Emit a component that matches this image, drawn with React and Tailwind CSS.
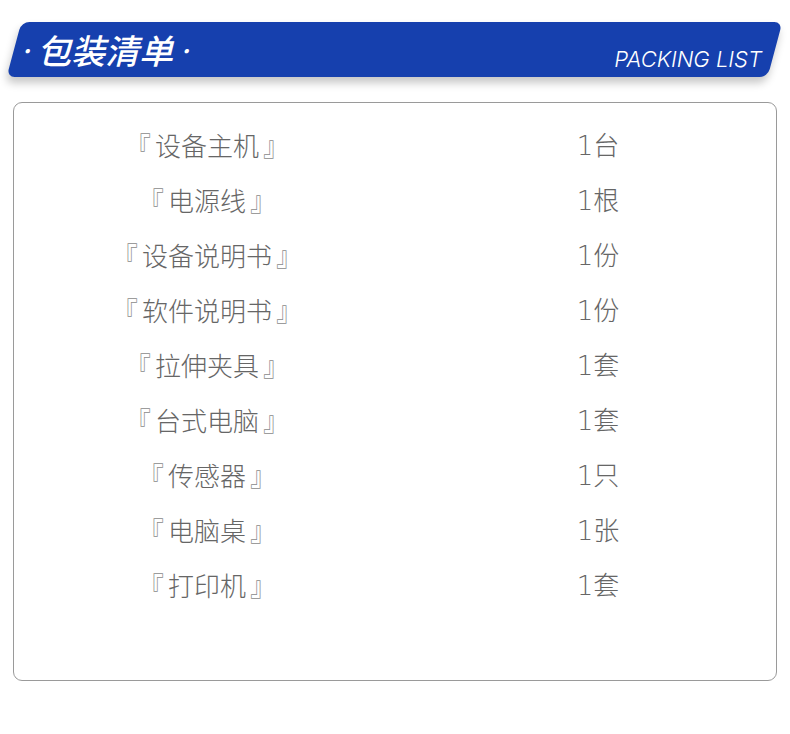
import React from "react";

const items = [
  ["设备主机", "台"],
  ["电源线", "根"],
  ["设备说明书", "份"],
  ["软件说明书", "份"],
  ["拉伸夹具", "套"],
  ["台式电脑", "套"],
  ["传感器", "只"],
  ["电脑桌", "张"],
  ["打印机", "套"],
];

export default function App() {
  return (
    <div
      className="w-[790px] h-[734px] bg-white overflow-hidden"
      style={{ fontFamily: '"Noto Sans CJK SC", "Noto Sans", sans-serif' }}
    >
      <div className="pt-[22px] pl-[14px]">
        <div className="relative w-[761px] h-[55px]">
          <div className="absolute inset-0 -skew-x-[15deg] rounded-[8px] bg-[#1640ae] shadow-[0_6px_8px_rgba(0,0,0,0.22)]" />
          <div className="relative flex h-full items-stretch justify-between pl-[3px] pr-[13px]">
            <div className="flex items-center text-white italic font-medium text-[34px] leading-none">
              <span className="text-[18px] mr-[2px]">·</span>
              <span>包装清单</span>
              <span className="text-[18px] ml-[3px]">·</span>
            </div>
            <div
              className="flex items-end pb-[7px] text-white italic font-light text-[22px] leading-none"
              style={{ fontFamily: '"Inter", "Roboto", sans-serif' }}
            >
              PACKING LIST
            </div>
          </div>
        </div>
      </div>
      <div className="ml-[13px] mt-[25px] w-[764px] h-[579px] rounded-[9px] border border-[#9a9a9a] pt-[14px]">
        {items.map(([name, qty], i) => (
          <div key={i} className="flex h-[55px] items-center text-[26px] font-light text-[#666666] leading-none">
            <div className="w-[386px] shrink-0 text-center">
              <span className="text-[#8a8a8a] mr-[4px]">『</span>
              {name}
              <span className="text-[#8a8a8a] ml-[4px]">』</span>
            </div>
            <div className="w-[376px] shrink-0 pl-[20px] text-center">
              <span
                className="font-extralight"
                style={{ fontFamily: '"DejaVu Sans", sans-serif' }}
              >
                1
              </span>
              {qty}
            </div>
          </div>
        ))}
      </div>
    </div>
  );
}
